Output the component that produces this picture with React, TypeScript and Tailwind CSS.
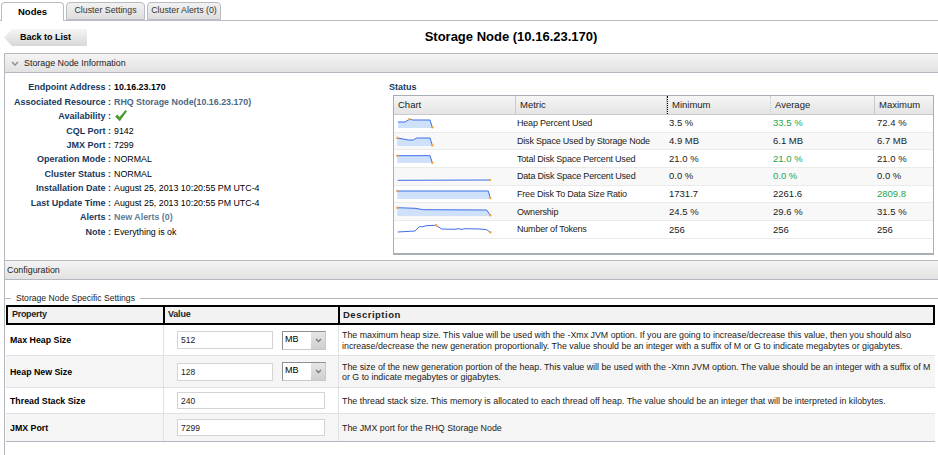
import React from "react";

const infoRows: { label: string; value: React.ReactNode }[] = [
  { label: "Endpoint Address", value: <span className="font-bold">10.16.23.170</span> },
  { label: "Associated Resource", value: <span className="font-bold text-[#4a6a86]">RHQ Storage Node(10.16.23.170)</span> },
  { label: "Availability", value: <CheckMark /> },
  { label: "CQL Port", value: "9142" },
  { label: "JMX Port", value: "7299" },
  { label: "Operation Mode", value: "NORMAL" },
  { label: "Cluster Status", value: "NORMAL" },
  { label: "Installation Date", value: "August 25, 2013 10:20:55 PM UTC-4" },
  { label: "Last Update Time", value: "August 25, 2013 10:20:55 PM UTC-4" },
  { label: "Alerts", value: <span className="font-bold text-[#5f7d96]">New Alerts (0)</span> },
  { label: "Note", value: "Everything is ok" },
];

type Metric = {
  name: string;
  min: string;
  avg: string;
  max: string;
  green?: "avg" | "max";
  line: [number, number][];
  dots: [number, number][];
  noFill?: boolean;
};

const metrics: Metric[] = [
  {
    name: "Heap Percent Used", min: "3.5 %", avg: "33.5 %", max: "72.4 %", green: "avg",
    line: [[4, 7], [11, 7], [15.3, 4.3], [19.3, 5], [36, 5], [38.3, 12.3]],
    dots: [[15.3, 4.3], [38.3, 12.3]],
  },
  {
    name: "Disk Space Used by Storage Node", min: "4.9 MB", avg: "6.1 MB", max: "6.7 MB",
    line: [[3.3, 5], [9.3, 6], [14.3, 7], [19.3, 7], [22.7, 5], [36, 5], [38.3, 12.3]],
    dots: [[3.3, 5], [38.3, 12.3]],
  },
  {
    name: "Total Disk Space Percent Used", min: "21.0 %", avg: "21.0 %", max: "21.0 %", green: "avg",
    line: [[3.3, 5.7], [36, 5.7], [38.3, 12.7]],
    dots: [[3.3, 5.7], [38.3, 12.7]],
  },
  {
    name: "Data Disk Space Percent Used", min: "0.0 %", avg: "0.0 %", max: "0.0 %", green: "avg",
    line: [[3.7, 12.3], [96, 12]],
    dots: [[96, 12]],
    noFill: true,
  },
  {
    name: "Free Disk To Data Size Ratio", min: "1731.7", avg: "2261.6", max: "2809.8", green: "max",
    line: [[3.3, 5], [94.3, 5], [96.3, 12]],
    dots: [[3.3, 5], [96.3, 12]],
  },
  {
    name: "Ownership", min: "24.5 %", avg: "29.6 %", max: "31.5 %",
    line: [[3.3, 4.7], [21, 5.3], [29.3, 6.7], [92.7, 7], [96.3, 12.3]],
    dots: [[3.3, 4.7], [96.3, 12.3]],
  },
  {
    name: "Number of Tokens", min: "256", avg: "256", max: "256",
    line: [[3.7, 11], [21, 10], [25.3, 5.7], [29, 5.7], [32, 4.7], [42, 4.3], [47.7, 8], [61, 8.3], [64, 7.7], [68, 8.3], [71, 7.7], [86, 8], [92.7, 8.7], [96.3, 11.3]],
    dots: [[42, 4.3], [96.3, 11.3]],
    noFill: true,
  },
];

function CheckMark() {
  return (
    <svg width="14" height="13" viewBox="0 0 14 13" className="block -mt-[2px]">
      <path d="M1 7.5 L3.5 5.5 L5.5 8 L11.5 1 L13 2.2 L5.8 12.2 Z" fill="#4f9a2e" />
    </svg>
  );
}

function Spark({ m }: { m: Metric }) {
  const pts = m.line.map((p) => p.join(",")).join(" ");
  const first = m.line[0];
  const last = m.line[m.line.length - 1];
  return (
    <svg width="100" height="17" viewBox="0 0 100 17" className="block">
      {!m.noFill && <polygon points={`${pts} ${last[0]},13 ${first[0]},13`} fill="#cfe0fb" />}
      <polyline points={pts} fill="none" stroke="#3d6fe8" strokeWidth="1" />
      {m.dots.map((d, i) => (
        <circle key={i} cx={d[0]} cy={d[1]} r="1.2" fill="#f9a13c" />
      ))}
    </svg>
  );
}

function Tab({ label, active, w }: { label: string; active?: boolean; w: string }) {
  return (
    <div
      className={`${w} flex items-center justify-center rounded-t-[4px] border border-[#b9bcc4] ${
        active
          ? "h-[19px] border-b-0 bg-white font-bold text-black text-[9.5px] -mb-px z-10"
          : "h-[18px] bg-gradient-to-b from-[#f2f2f2] to-[#dedede] text-[#333] text-[8.8px]"
      }`}
    >
      {label}
    </div>
  );
}

function SectionBar({ children }: { children: React.ReactNode }) {
  return (
    <div className="h-[20px] pt-px flex items-center border-y border-[#b4b7bf] bg-gradient-to-b from-[#f4f4f4] to-[#e2e2e2] text-[8.9px] text-[#222]">
      {children}
    </div>
  );
}

function SelectBox() {
  return (
    <div className="w-[44px] h-[19px] flex border border-[#8f8f8f] border-b-[#c8c8c8] border-r-[#c8c8c8] bg-white">
      <span className="flex-1 pl-[2px] text-[9px] leading-[15px] text-black">MB</span>
      <span className="w-[14px] flex items-center justify-center bg-gradient-to-b from-[#e6e6e6] to-[#cfcfcf]">
        <svg width="7" height="5" viewBox="0 0 7 5">
          <path d="M1 1 L3.5 3.5 L6 1" fill="none" stroke="#7a7a7a" strokeWidth="1.4" />
        </svg>
      </span>
    </div>
  );
}

function ValueInput({ value, wide }: { value: string; wide?: boolean }) {
  return (
    <div
      className={`${wide ? "w-[148px] h-[17px]" : "w-[96px] h-[18px]"} flex items-center pl-[3px] pt-px border border-[#d4d4d4] bg-white text-[8.5px] text-[#222]`}
    >
      {value}
    </div>
  );
}

const configRows = [
  {
    name: "Max Heap Size", value: "512", unit: true, h: "h-[31px]", bg: "bg-white",
    desc: "The maximum heap size. This value will be used with the -Xmx JVM option. If you are going to increase/decrease this value, then you should also increase/decrease the new generation proportionally. The value should be an integer with a suffix of M or G to indicate megabytes or gigabytes.",
  },
  {
    name: "Heap New Size", value: "128", unit: true, h: "h-[32px]", bg: "bg-[#f5f5f5]",
    desc: "The size of the new generation portion of the heap. This value will be used with the -Xmn JVM option. The value should be an integer with a suffix of M or G to indicate megabytes or gigabytes.",
  },
  {
    name: "Thread Stack Size", value: "240", h: "h-[26px]", bg: "bg-white",
    desc: "The thread stack size. This memory is allocated to each thread off heap. The value should be an integer that will be interpreted in kilobytes.",
  },
  {
    name: "JMX Port", value: "7299", h: "h-[27px]", bg: "bg-[#f5f5f5]",
    desc: "The JMX port for the RHQ Storage Node",
  },
];

const statusCols = "grid-cols-[122px_151px_104px_104px_1fr]";

export default function App() {
  return (
    <div className="w-[938px] h-[455px] overflow-hidden bg-white font-['Liberation_Sans',Arial,sans-serif] text-[8.85px] text-black">
      {/* tabs */}
      <div className="h-[21px] pt-[2px] pl-px flex items-end gap-[2px] border-b border-[#b9bcc4]">
        <Tab label="Nodes" active w="w-[63px]" />
        <Tab label="Cluster Settings" w="w-[79px]" />
        <Tab label="Cluster Alerts (0)" w="w-[74px]" />
      </div>

      {/* title row */}
      <div className="h-[32px] flex items-center">
        <div className="ml-[4px] mt-px w-[83px] h-[17px] flex items-center justify-center bg-gradient-to-b from-[#f5f5f5] to-[#d8d8d8] [clip-path:polygon(8px_0,100%_0,100%_100%,8px_100%,0_50%)] font-bold text-[9px]">
          Back to List
        </div>
        <h1 className="w-[848px] text-center font-bold text-[13px] text-black">Storage Node (10.16.23.170)</h1>
      </div>

      {/* main panel */}
      <div className="ml-[4px] h-[402px] border-l border-[#b4b7bf]">
        <SectionBar>
          <svg width="8" height="6" viewBox="0 0 8 6" className="ml-[6px] mr-[5px]">
            <path d="M1 1 L4 4 L7 1" fill="none" stroke="#888" strokeWidth="1.3" />
          </svg>
          Storage Node Information
        </SectionBar>

        <div className="h-[187px] flex">
          {/* info list */}
          <div className="w-[384px] pt-[7px]">
            {infoRows.map((r) => (
              <div key={r.label} className="h-[14.45px] flex items-center leading-[14px]">
                <span className="w-[106px] text-right font-bold text-[9px] text-[#17375e] whitespace-nowrap">{r.label} :</span>
                <span className="ml-[3px] whitespace-nowrap">{r.value}</span>
              </div>
            ))}
          </div>

          {/* status table */}
          <div className="w-[545px] pt-[8px]">
            <div className="h-[14px] font-bold text-[9px] text-[#17375e] leading-[12px]">Status</div>
            <div className="ml-[4px] w-[541px] h-[160px] border border-[#a9adb6] border-b-2">
              <div className={`grid ${statusCols} h-[19px] border-b border-[#c8cad0] bg-gradient-to-b from-[#f6f6f6] to-[#e4e4e4] text-[9.5px] text-[#222]`}>
                {["Chart", "Metric", "Minimum", "Average", "Maximum"].map((c, i) => (
                  <div
                    key={c}
                    className={`flex items-center pl-[4px] border-r border-[#c8cad0] ${i === 2 ? "border-l border-l-black border-dotted" : ""} ${i === 4 ? "border-r-0" : ""}`}
                  >
                    {c}
                  </div>
                ))}
              </div>
              {metrics.map((m, idx) => (
                <div
                  key={m.name}
                  className={`grid ${statusCols} h-[17.7px] border-b border-[#ebebeb] text-[9.5px] text-[#222] ${idx % 2 === 1 ? "bg-[#f8f8f8]" : "bg-white"}`}
                >
                  <div><Spark m={m} /></div>
                  <div className="flex items-center pl-px pt-px whitespace-nowrap text-[9px] tracking-[-0.2px]">{m.name}</div>
                  <div className="flex items-center pl-[2px]">{m.min}</div>
                  <div className={`flex items-center pl-[2px] ${m.green === "avg" ? "text-[#1aa653]" : ""}`}>{m.avg}</div>
                  <div className={`flex items-center pl-[2px] ${m.green === "max" ? "text-[#1aa653]" : ""}`}>{m.max}</div>
                </div>
              ))}
            </div>
          </div>
        </div>

        <SectionBar>
          <span className="pl-[2px]">Configuration</span>
        </SectionBar>

        {/* settings */}
        <div className="flex items-center h-[12px] mt-[12px] text-[8.6px] text-[#222]">
          <span className="w-[6px] h-px bg-[#b4b7bf]" />
          <span className="px-[5px]">Storage Node Specific Settings</span>
          <span className="flex-1 h-px bg-[#b4b7bf]" />
        </div>

        <div className="ml-px w-[929px] mt-[1px] border-b border-[#b4b7bf]">
          <div className="grid grid-cols-[155px_175px_1fr] h-[20px] border-2 border-black bg-[#f2f2f2] font-bold text-[#222]">
            <div className="flex items-center pl-[4px] text-[9px] tracking-[-0.3px]">Property</div>
            <div className="flex items-center pl-[3px] border-l-2 border-black text-[9px] tracking-[-0.2px]">Value</div>
            <div className="flex items-center pl-[3px] border-l-2 border-black text-[9.5px] tracking-[0.5px]">Description</div>
          </div>
          {configRows.map((r) => (
            <div key={r.name} className={`grid grid-cols-[157px_175px_1fr] ${r.h} ${r.bg} border-b border-[#dfe1e5] last:border-b-0`}>
              <div className="flex items-center pl-[4px] pt-[2px] font-bold text-[8.8px]">{r.name}</div>
              <div className="flex items-center gap-[9px] pl-[13px] border-l border-[#dfe1e5]">
                <ValueInput value={r.value} wide={!r.unit} />
                {r.unit && <SelectBox />}
              </div>
              <div className="flex items-center pl-[3px] pt-px border-l border-[#dfe1e5] leading-[10.5px] text-[#222] min-w-0">
                <p className="w-[597px] shrink-0">{r.desc}</p>
              </div>
            </div>
          ))}
        </div>
      </div>
    </div>
  );
}
